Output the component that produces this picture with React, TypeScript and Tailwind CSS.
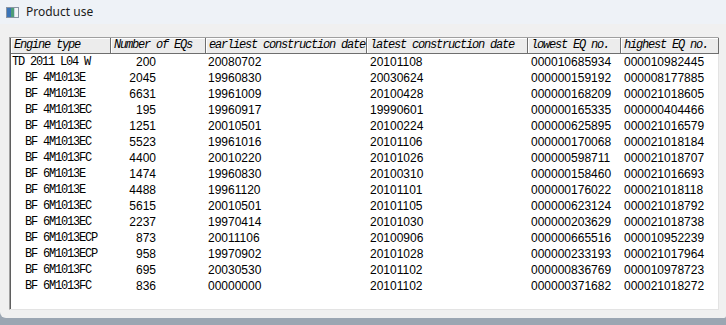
const headers = [
  'Engine type',
  'Number of EQs',
  'earliest construction date',
  'latest construction date',
  'lowest EQ no.',
  'highest EQ no.',
];

const rows: [string, string, string, string, string, string][] = [
  ['TD 2011 L04 W', '200', '20080702', '20101108', '000010685934', '000010982445'],
  ['BF 4M1013E', '2045', '19960830', '20030624', '000000159192', '000008177885'],
  ['BF 4M1013E', '6631', '19961009', '20100428', '000000168209', '000021018605'],
  ['BF 4M1013EC', '195', '19960917', '19990601', '000000165335', '000000404466'],
  ['BF 4M1013EC', '1251', '20010501', '20100224', '000000625895', '000021016579'],
  ['BF 4M1013EC', '5523', '19961016', '20101106', '000000170068', '000021018184'],
  ['BF 4M1013FC', '4400', '20010220', '20101026', '000000598711', '000021018707'],
  ['BF 6M1013E', '1474', '19960830', '20100310', '000000158460', '000021016693'],
  ['BF 6M1013E', '4488', '19961120', '20101101', '000000176022', '000021018118'],
  ['BF 6M1013EC', '5615', '20010501', '20101105', '000000623124', '000021018792'],
  ['BF 6M1013EC', '2237', '19970414', '20101030', '000000203629', '000021018738'],
  ['BF 6M1013ECP', '873', '20011106', '20100906', '000000665516', '000010952239'],
  ['BF 6M1013ECP', '958', '19970902', '20101028', '000000233193', '000021017964'],
  ['BF 6M1013FC', '695', '20030530', '20101102', '000000836769', '000010978723'],
  ['BF 6M1013FC', '836', '00000000', '20101102', '000000371682', '000021018272'],
];

const cols = 'grid grid-cols-[100px_95px_161px_161px_93px_98px]';
const mono = "font-['Liberation_Mono',monospace] text-[12px] tracking-[-1.2px]";
const sans = "font-['Liberation_Sans',Arial,sans-serif] text-[12px]";

function WindowIcon() {
  return (
    <svg width="13" height="11" viewBox="0 0 13 11" className="shrink-0">
      <rect x="0.5" y="0.5" width="12" height="10" fill="#f3f5f8" stroke="#8894a3" />
      <rect x="1" y="1" width="4" height="9" fill="#3a74b8" />
      <rect x="5" y="1" width="3" height="9" fill="#4d9c78" />
      <rect x="8" y="1" width="1" height="9" fill="#c9d3de" />
    </svg>
  );
}

export default function App() {
  return (
    <div className="w-[726px] h-[325px] overflow-hidden bg-[#9ba6b2] flex flex-col">
      <div className="h-[318px] bg-[#f0f0f0] rounded-bl-[6px] rounded-br-[2px] flex flex-col">
        <div className="h-[24px] bg-[#eef2f7] flex items-center gap-[7px] pl-[6px]">
          <WindowIcon />
          <span className="font-['Noto_Sans',sans-serif] text-[12px] text-[#1b1b1b] leading-none">Product use</span>
        </div>
        <div className="pt-[13px] pl-[9px] pr-[7px]">
          <div className="h-[273px] border-l border-t border-[#a0a0a0] border-r border-b border-r-[#e3e3e3] border-b-[#e3e3e3] bg-white">
            <div className="h-full border-l border-[#5f5f5f] flex flex-col">
              <div className={`${cols} h-[16px]`}>
                {headers.map(h => (
                  <div
                    key={h}
                    className={`${mono} italic overflow-hidden whitespace-nowrap bg-[#ececec] border-r border-b border-[#6e6e6e] shadow-[inset_1px_1px_0_#ffffff] pl-[3px] leading-[15px] text-black`}
                  >
                    {h}
                  </div>
                ))}
              </div>
              {rows.map((r, i) => (
                <div key={i} className={`${cols} h-[16px] leading-[16px] text-black`}>
                  <div className={`${mono} whitespace-nowrap ${i === 0 ? 'pl-[1px]' : 'pl-[14px]'}`}>{r[0]}</div>
                  <div className={`${sans} text-right pr-[50px]`}>{r[1]}</div>
                  <div className={`${sans} pl-[2px]`}>{r[2]}</div>
                  <div className={`${sans} pl-[3px]`}>{r[3]}</div>
                  <div className={`${sans} pl-[3px]`}>{r[4]}</div>
                  <div className={`${sans} pl-[3px]`}>{r[5]}</div>
                </div>
              ))}
            </div>
          </div>
        </div>
      </div>
    </div>
  );
}
